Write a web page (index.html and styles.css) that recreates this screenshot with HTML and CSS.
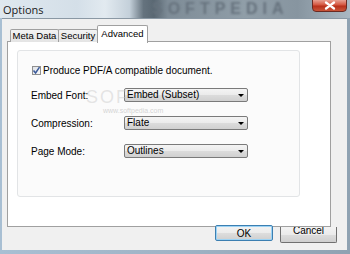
FILE: index.html
```html
<!DOCTYPE html>
<html>
<head>
<meta charset="utf-8">
<link rel="stylesheet" href="styles.css">
</head>
<body>
<div class="window">
  <div class="titlebar">
    <span class="title">Options</span>
    <span class="wm-title">SOFTPEDIA</span>
    <div class="close">
      <svg width="12" height="9" viewBox="0 0 12 9"><path d="M2 1.5 L10 7.5 M10 1.5 L2 7.5" stroke="#fff" stroke-width="2.2" stroke-linecap="round"/></svg>
    </div>
  </div>
  <div class="client">
    <div class="tabctl">
      <div class="tabstrip">
        <div class="tab t1">Meta Data</div>
        <div class="tab t2">Security</div>
        <div class="tab active">Advanced</div>
      </div>
      <div class="page">
        <div class="group">
          <label class="check-row"><span class="checkbox"><svg width="9" height="9" viewBox="0 0 9 9"><path d="M1.5 4.5 L3.6 7 L7.5 1.2" fill="none" stroke="#3a5a9a" stroke-width="1.5"/></svg></span>Produce PDF/A compatible document.</label>
          <div class="field"><span class="lbl">Embed Font:</span><div class="combo"><span>Embed (Subset)</span><i class="arrow"></i></div></div>
          <div class="field"><span class="lbl">Compression:</span><div class="combo"><span>Flate</span><i class="arrow"></i></div></div>
          <div class="field"><span class="lbl">Page Mode:</span><div class="combo"><span>Outlines</span><i class="arrow"></i></div></div>
        </div>
        <span class="wm-big">SOF</span>
        <span class="wm-small">www.softpedia.com</span>
      </div>
    </div>
    <div class="buttons">
      <div class="btn ok">OK</div>
      <div class="btn cancel"><span>Cancel</span></div>
    </div>
  </div>
</div>
</body>
</html>
```

FILE: styles.css
```css
html, body {
  margin: 0;
  padding: 0;
  background: #9fb3c5;
}
body {
  width: 350px;
  height: 254px;
  overflow: hidden;
  font-family: "Liberation Sans", Arial, sans-serif;
  font-size: 10px;
  color: #000;
}
.window {
  width: 350px;
  height: 254px;
  display: flex;
  flex-direction: column;
  background: linear-gradient(90deg, #a8bfd3 0%, #9fb3c5 50%, #8fa2b2 100%);
}
.titlebar {
  position: relative;
  height: 18px;
  flex: none;
  display: flex;
  align-items: center;
  background: linear-gradient(90deg, #dfe8ef 0%, #d4dfe8 22%, #e2eaf0 30%, #c4d0da 37%, #65737e 41%, #5a6873 44%, #7e8c97 48%, #909ea8 70%, #8795a0 85%, #aab8c3 100%);
  overflow: hidden;
}
.title {
  margin-left: 3px;
  font-family: "Open Sans", "Liberation Sans", sans-serif;
  font-size: 11px;
  color: #1a1a1a;
  position: relative;
  z-index: 1;
}
.wm-title {
  position: absolute;
  left: 152px;
  top: 0px;
  font-size: 16px;
  line-height: 18px;
  font-weight: bold;
  letter-spacing: 5px;
  color: #66727d;
  filter: blur(1.2px);
}
.close {
  position: absolute;
  right: 3px;
  top: -1px;
  width: 35px;
  height: 13px;
  border: 1px solid #6b2a22;
  border-radius: 0 0 4px 4px;
  background: linear-gradient(180deg, #e8a092 0%, #d4553f 45%, #b8301b 55%, #c9553a 100%);
  display: flex;
  align-items: center;
  justify-content: center;
  box-sizing: border-box;
}
.client {
  flex: 1;
  margin: 0 3px 4px 2px;
  background: #f0f0f0;
  border-top: 1px solid #8a98a4;
  display: flex;
  flex-direction: column;
  padding: 6px 0 0 5px;
}
.tabctl {
  width: 324px;
  display: flex;
  flex-direction: column;
}
.tabstrip {
  display: flex;
  align-items: flex-end;
  padding-left: 3px;
  height: 17px;
  position: relative;
  z-index: 1;
  margin-bottom: -1px;
}
.tab {
  height: 13px;
  box-sizing: border-box;
  padding: 0;
  border: 1px solid #a0a0a0;
  border-bottom: none;
  background: linear-gradient(180deg, #f3f3f3, #e4e4e4);
  line-height: 12px;
  margin-right: -1px;
  border-radius: 2px 2px 0 0;
  white-space: nowrap;
  font-size: 9.5px;
  text-align: center;
}
.t1 { width: 49px; }
.t2 { width: 40px; }
.tab.active {
  width: 51px;
  height: 18px;
  background: #fff;
  line-height: 15px;
  margin-bottom: -1px;
}
.page {
  position: relative;
  height: 186px;
  box-sizing: border-box;
  background: #fff;
  border: 1px solid #a0a0a0;
  padding: 8px 0 0 9px;
}
.group {
  width: 283px;
  height: 147px;
  box-sizing: border-box;
  background: #fbfbfb;
  border: 1px solid #e2e4e6;
  border-radius: 3px;
  padding: 14px 0 0 13px;
  display: flex;
  flex-direction: column;
}
.check-row {
  display: flex;
  align-items: center;
  height: 11px;
  margin-left: 1px;
}
.checkbox {
  width: 9px;
  height: 9px;
  box-sizing: border-box;
  border: 1px solid #8f8f8f;
  background: linear-gradient(135deg, #dfe3e8, #f8f8f8);
  margin-right: 2px;
  display: flex;
  align-items: center;
  justify-content: center;
}
.checkbox svg { flex: none; }
.field {
  display: flex;
  align-items: center;
  height: 14px;
  margin-top: 14px;
}
.check-row + .field { margin-top: 12px; }
.lbl {
  width: 93px;
}
.combo {
  width: 124px;
  height: 14px;
  box-sizing: border-box;
  border: 1px solid #7a7a7a;
  border-radius: 2px;
  background: linear-gradient(180deg, #f4f4f4 0%, #ebebeb 50%, #dcdcdc 51%, #d0d0d0 100%);
  display: flex;
  align-items: center;
  justify-content: space-between;
  padding: 0 3px 0 2px;
  line-height: 12px;
}
.arrow {
  width: 0;
  height: 0;
  border-left: 3px solid transparent;
  border-right: 3px solid transparent;
  border-top: 3px solid #000;
}
.wm-big {
  position: absolute;
  left: 78px;
  top: 45px;
  font-size: 18px;
  letter-spacing: 2px;
  color: rgba(200, 200, 200, 0.45);
  pointer-events: none;
}
.wm-small {
  position: absolute;
  left: 95px;
  top: 65px;
  font-size: 7px;
  color: rgba(170, 170, 170, 0.5);
}
.buttons {
  display: flex;
  justify-content: flex-end;
  gap: 7px;
  padding-right: 10px;
  margin-top: -2px;
  position: relative;
}
.btn {
  height: 16px;
  box-sizing: border-box;
  border: 1px solid #707070;
  border-radius: 2px;
  background: linear-gradient(180deg, #f3f3f3 0%, #ebebeb 50%, #dddddd 51%, #cfcfcf 100%);
  display: flex;
  align-items: center;
  justify-content: center;
}
.ok {
  width: 58px;
  border-color: #3c7fb1;
  box-shadow: inset 0 0 0 1px #9cd3f5;
}
.cancel {
  width: 57px;
  margin-top: 2px;
  border-top: none;
  border-radius: 0 0 2px 2px;
  overflow: hidden;
  align-items: flex-start;
}
.cancel span {
  margin-top: -3px;
  line-height: 14px;
}
```
